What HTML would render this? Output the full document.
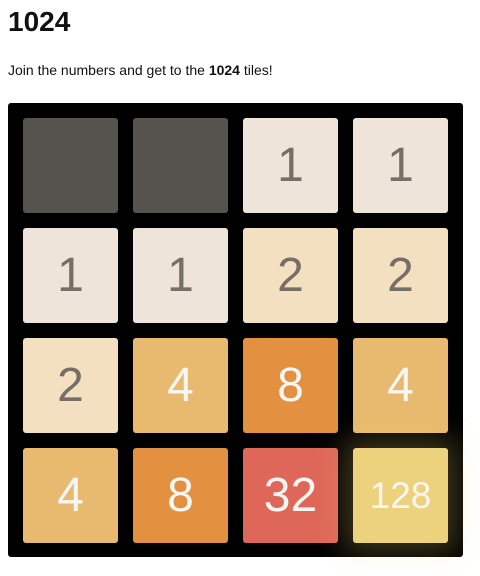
<!DOCTYPE html>
<html><head><style>
body{margin:0;background:#fff;font-family:"Liberation Sans",Helvetica,Arial,sans-serif;width:480px;height:576px;overflow:hidden;position:relative}
h1{position:absolute;left:8px;top:6px;margin:0;font-size:28px;font-weight:bold;color:#111}
p{position:absolute;left:8px;top:62px;margin:0;font-size:14px;color:#111}
.board{position:absolute;left:8px;top:103px;width:455px;height:454px;background:#000;border-radius:3px}
.t{position:absolute;width:95px;height:95px;border-radius:3px;display:flex;align-items:center;justify-content:center;font-size:48px;color:#f9f6f2}
.e{background:#56524e}
.v1{background:#eee4da;color:#776e65}
.v2{background:#f3e0c1;color:#776e65}
.v4{background:#e8ba6f}
.v8{background:#e39040}
.v32{background:#df6759}
.v128{background:#edd27e;font-size:37px;box-shadow:0 0 30px 10px rgba(243,215,116,0.25)}
</style></head><body>
<h1>1024</h1>
<p>Join the numbers and get to the <b>1024</b> tiles!</p>
<div class="board">
<div class="t e" style="left:15px;top:15px"></div>
<div class="t e" style="left:125px;top:15px"></div>
<div class="t v1" style="left:235px;top:15px">1</div>
<div class="t v1" style="left:345px;top:15px">1</div>
<div class="t v1" style="left:15px;top:125px">1</div>
<div class="t v1" style="left:125px;top:125px">1</div>
<div class="t v2" style="left:235px;top:125px">2</div>
<div class="t v2" style="left:345px;top:125px">2</div>
<div class="t v2" style="left:15px;top:235px">2</div>
<div class="t v4" style="left:125px;top:235px">4</div>
<div class="t v8" style="left:235px;top:235px">8</div>
<div class="t v4" style="left:345px;top:235px">4</div>
<div class="t v4" style="left:15px;top:345px">4</div>
<div class="t v8" style="left:125px;top:345px">8</div>
<div class="t v32" style="left:235px;top:345px">32</div>
<div class="t v128" style="left:345px;top:345px">128</div>
</div>
</body></html>
